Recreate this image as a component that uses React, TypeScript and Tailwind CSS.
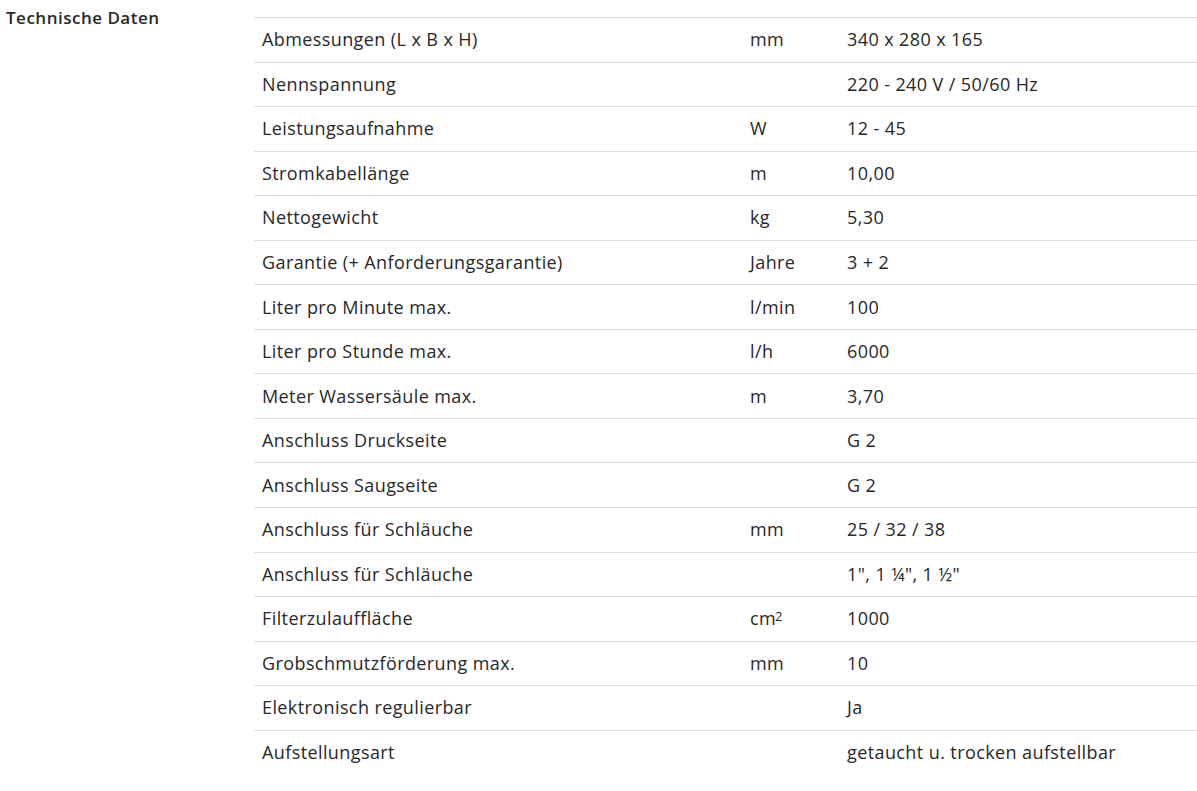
import React from 'react';

type Row = { label: string; unit?: React.ReactNode; value: string };

const rows: Row[] = [
  { label: 'Abmessungen (L x B x H)', unit: 'mm', value: '340 x 280 x 165' },
  { label: 'Nennspannung', value: '220 - 240 V / 50/60 Hz' },
  { label: 'Leistungsaufnahme', unit: 'W', value: '12 - 45' },
  { label: 'Stromkabellänge', unit: 'm', value: '10,00' },
  { label: 'Nettogewicht', unit: 'kg', value: '5,30' },
  { label: 'Garantie (+ Anforderungsgarantie)', unit: 'Jahre', value: '3 + 2' },
  { label: 'Liter pro Minute max.', unit: 'l/min', value: '100' },
  { label: 'Liter pro Stunde max.', unit: 'l/h', value: '6000' },
  { label: 'Meter Wassersäule max.', unit: 'm', value: '3,70' },
  { label: 'Anschluss Druckseite', value: 'G 2' },
  { label: 'Anschluss Saugseite', value: 'G 2' },
  { label: 'Anschluss für Schläuche', unit: 'mm', value: '25 / 32 / 38' },
  { label: 'Anschluss für Schläuche', value: '1", 1 ¼", 1 ½"' },
  {
    label: 'Filterzulauffläche',
    unit: (
      <>
        cm<sup className="text-[13px] tracking-normal relative -top-[4px] -ml-[1px]">2</sup>
      </>
    ),
    value: '1000',
  },
  { label: 'Grobschmutzförderung max.', unit: 'mm', value: '10' },
  { label: 'Elektronisch regulierbar', value: 'Ja' },
  { label: 'Aufstellungsart', value: 'getaucht u. trocken aufstellbar' },
];

export default function App() {
  return (
    <div className="w-[1197px] h-[791px] bg-white text-[#282828] font-['Open_Sans',sans-serif] flex">
      <div className="w-[254px] shrink-0 pl-[6px] pt-[7px]">
        <h3 className="text-[17px] font-semibold leading-[22px] tracking-[0.5px]">Technische Daten</h3>
      </div>
      <div className="flex-1 pt-[17px]">
        {rows.map((r, i) => (
          <div
            key={i}
            className="flex items-center h-[44.56px] border-t border-[#dedede] text-[18px] tracking-[0.4px]"
          >
            <div className="w-[488px] pl-[8px]">{r.label}</div>
            <div className="w-[97px] pl-[8px]">{r.unit}</div>
            <div className="flex-1 pl-[8px]">{r.value}</div>
          </div>
        ))}
      </div>
    </div>
  );
}
